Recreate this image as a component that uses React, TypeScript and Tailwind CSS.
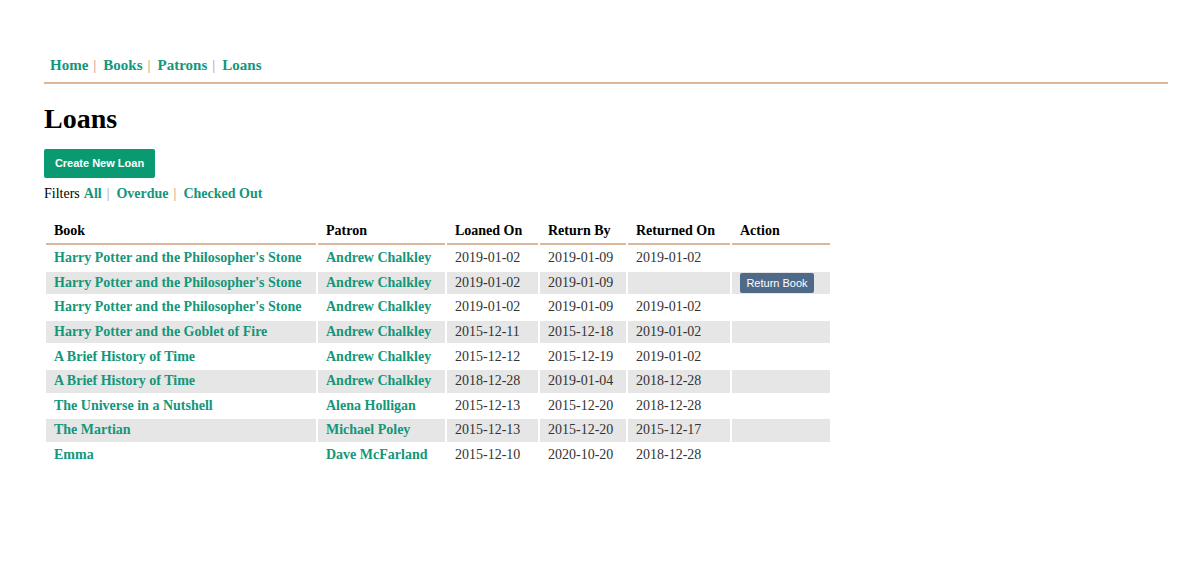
import React from "react";

const loans = [
  { book: "Harry Potter and the Philosopher's Stone", patron: "Andrew Chalkley", loaned: "2019-01-02", due: "2019-01-09", returned: "2019-01-02" },
  { book: "Harry Potter and the Philosopher's Stone", patron: "Andrew Chalkley", loaned: "2019-01-02", due: "2019-01-09", returned: "" },
  { book: "Harry Potter and the Philosopher's Stone", patron: "Andrew Chalkley", loaned: "2019-01-02", due: "2019-01-09", returned: "2019-01-02" },
  { book: "Harry Potter and the Goblet of Fire", patron: "Andrew Chalkley", loaned: "2015-12-11", due: "2015-12-18", returned: "2019-01-02" },
  { book: "A Brief History of Time", patron: "Andrew Chalkley", loaned: "2015-12-12", due: "2015-12-19", returned: "2019-01-02" },
  { book: "A Brief History of Time", patron: "Andrew Chalkley", loaned: "2018-12-28", due: "2019-01-04", returned: "2018-12-28" },
  { book: "The Universe in a Nutshell", patron: "Alena Holligan", loaned: "2015-12-13", due: "2015-12-20", returned: "2018-12-28" },
  { book: "The Martian", patron: "Michael Poley", loaned: "2015-12-13", due: "2015-12-20", returned: "2015-12-17" },
  { book: "Emma", patron: "Dave McFarland", loaned: "2015-12-10", due: "2020-10-20", returned: "2018-12-28" },
];

const navLinks = ["Home", "Books", "Patrons", "Loans"];
const filters = ["All", "Overdue", "Checked Out"];

export default function App() {
  return (
    <div className="min-h-[575px] bg-white px-[44px] pt-[54px] font-['Liberation_Serif',serif] text-[14px] text-[#222]">
      {/* nav */}
      <nav className="flex h-[22px] items-center pl-[6px] text-[15px] leading-[22px]">
        {navLinks.map((l, i) => (
          <React.Fragment key={l}>
            {i > 0 && <span className="inline-block pl-[5px] pr-[7px] text-[#b9967a]">|</span>}
            <a href="#" className="font-bold text-[#13967a]">
              {l}
            </a>
          </React.Fragment>
        ))}
      </nav>
      <div className="mt-[6px] h-[2px] w-[1124px] bg-[#dcb89c]" />

      <h1 className="mt-[18px] text-[28px] font-bold leading-[34px] text-black">Loans</h1>

      <button className="mt-[13px] flex h-[29px] w-[111px] items-center justify-center rounded-[2px] bg-[#0a9a72] font-['Liberation_Sans',sans-serif] text-[11px] font-bold text-white">
        Create New Loan
      </button>

      <div className="mt-[6px] flex items-center leading-[20px]">
        <span className="pr-[4px] text-black">Filters</span>
        {filters.map((f, i) => (
          <React.Fragment key={f}>
            {i > 0 && <span className="inline-block pl-[5px] pr-[7px] text-[#b9967a]">|</span>}
            <a href="#" className="font-bold text-[#13967a]">
              {f}
            </a>
          </React.Fragment>
        ))}
      </div>

      <table className="mt-[14px] border-separate border-spacing-[2px] text-left">
        <thead>
          <tr>
            <th className="w-[270px] border-b-2 border-[#dcb89c] px-[8px] pb-[1px] pt-0 leading-[22px] font-bold text-black">Book</th>
            <th className="w-[127px] border-b-2 border-[#dcb89c] px-[8px] pb-[1px] leading-[22px] font-bold text-black">Patron</th>
            <th className="w-[91px] border-b-2 border-[#dcb89c] px-[8px] pb-[1px] leading-[22px] font-bold text-black">Loaned On</th>
            <th className="w-[86px] border-b-2 border-[#dcb89c] px-[8px] pb-[1px] leading-[22px] font-bold text-black">Return By</th>
            <th className="w-[102px] border-b-2 border-[#dcb89c] px-[8px] pb-[1px] leading-[22px] font-bold text-black">Returned On</th>
            <th className="w-[98px] border-b-2 border-[#dcb89c] px-[8px] pb-[1px] leading-[22px] font-bold text-black">Action</th>
          </tr>
        </thead>
        <tbody>
          {loans.map((r, i) => {
            const bg = i % 2 === 1 ? "bg-[#e6e6e6]" : "";
            return (
              <tr key={i} className="h-[22.6px]">
                <td className={`${bg} px-[8px] py-0 leading-[22px]`}>
                  <a href="#" className="font-bold text-[#13967a]">{r.book}</a>
                </td>
                <td className={`${bg} px-[8px] py-0 leading-[22px]`}>
                  <a href="#" className="font-bold text-[#13967a]">{r.patron}</a>
                </td>
                <td className={`${bg} px-[8px] py-0 leading-[22px] text-[#333]`}>{r.loaned}</td>
                <td className={`${bg} px-[8px] py-0 leading-[22px] text-[#333]`}>{r.due}</td>
                <td className={`${bg} px-[8px] py-0 leading-[22px] text-[#333]`}>{r.returned}</td>
                <td className={`${bg} px-[8px] py-0 leading-[22px]`}>
                  {r.returned === "" && (
                    <button className="flex h-[20px] w-[74px] items-center justify-center rounded-[2px] bg-[#4f6a88] font-['Liberation_Sans',sans-serif] text-[11px] text-white">
                      Return Book
                    </button>
                  )}
                </td>
              </tr>
            );
          })}
        </tbody>
      </table>
    </div>
  );
}
